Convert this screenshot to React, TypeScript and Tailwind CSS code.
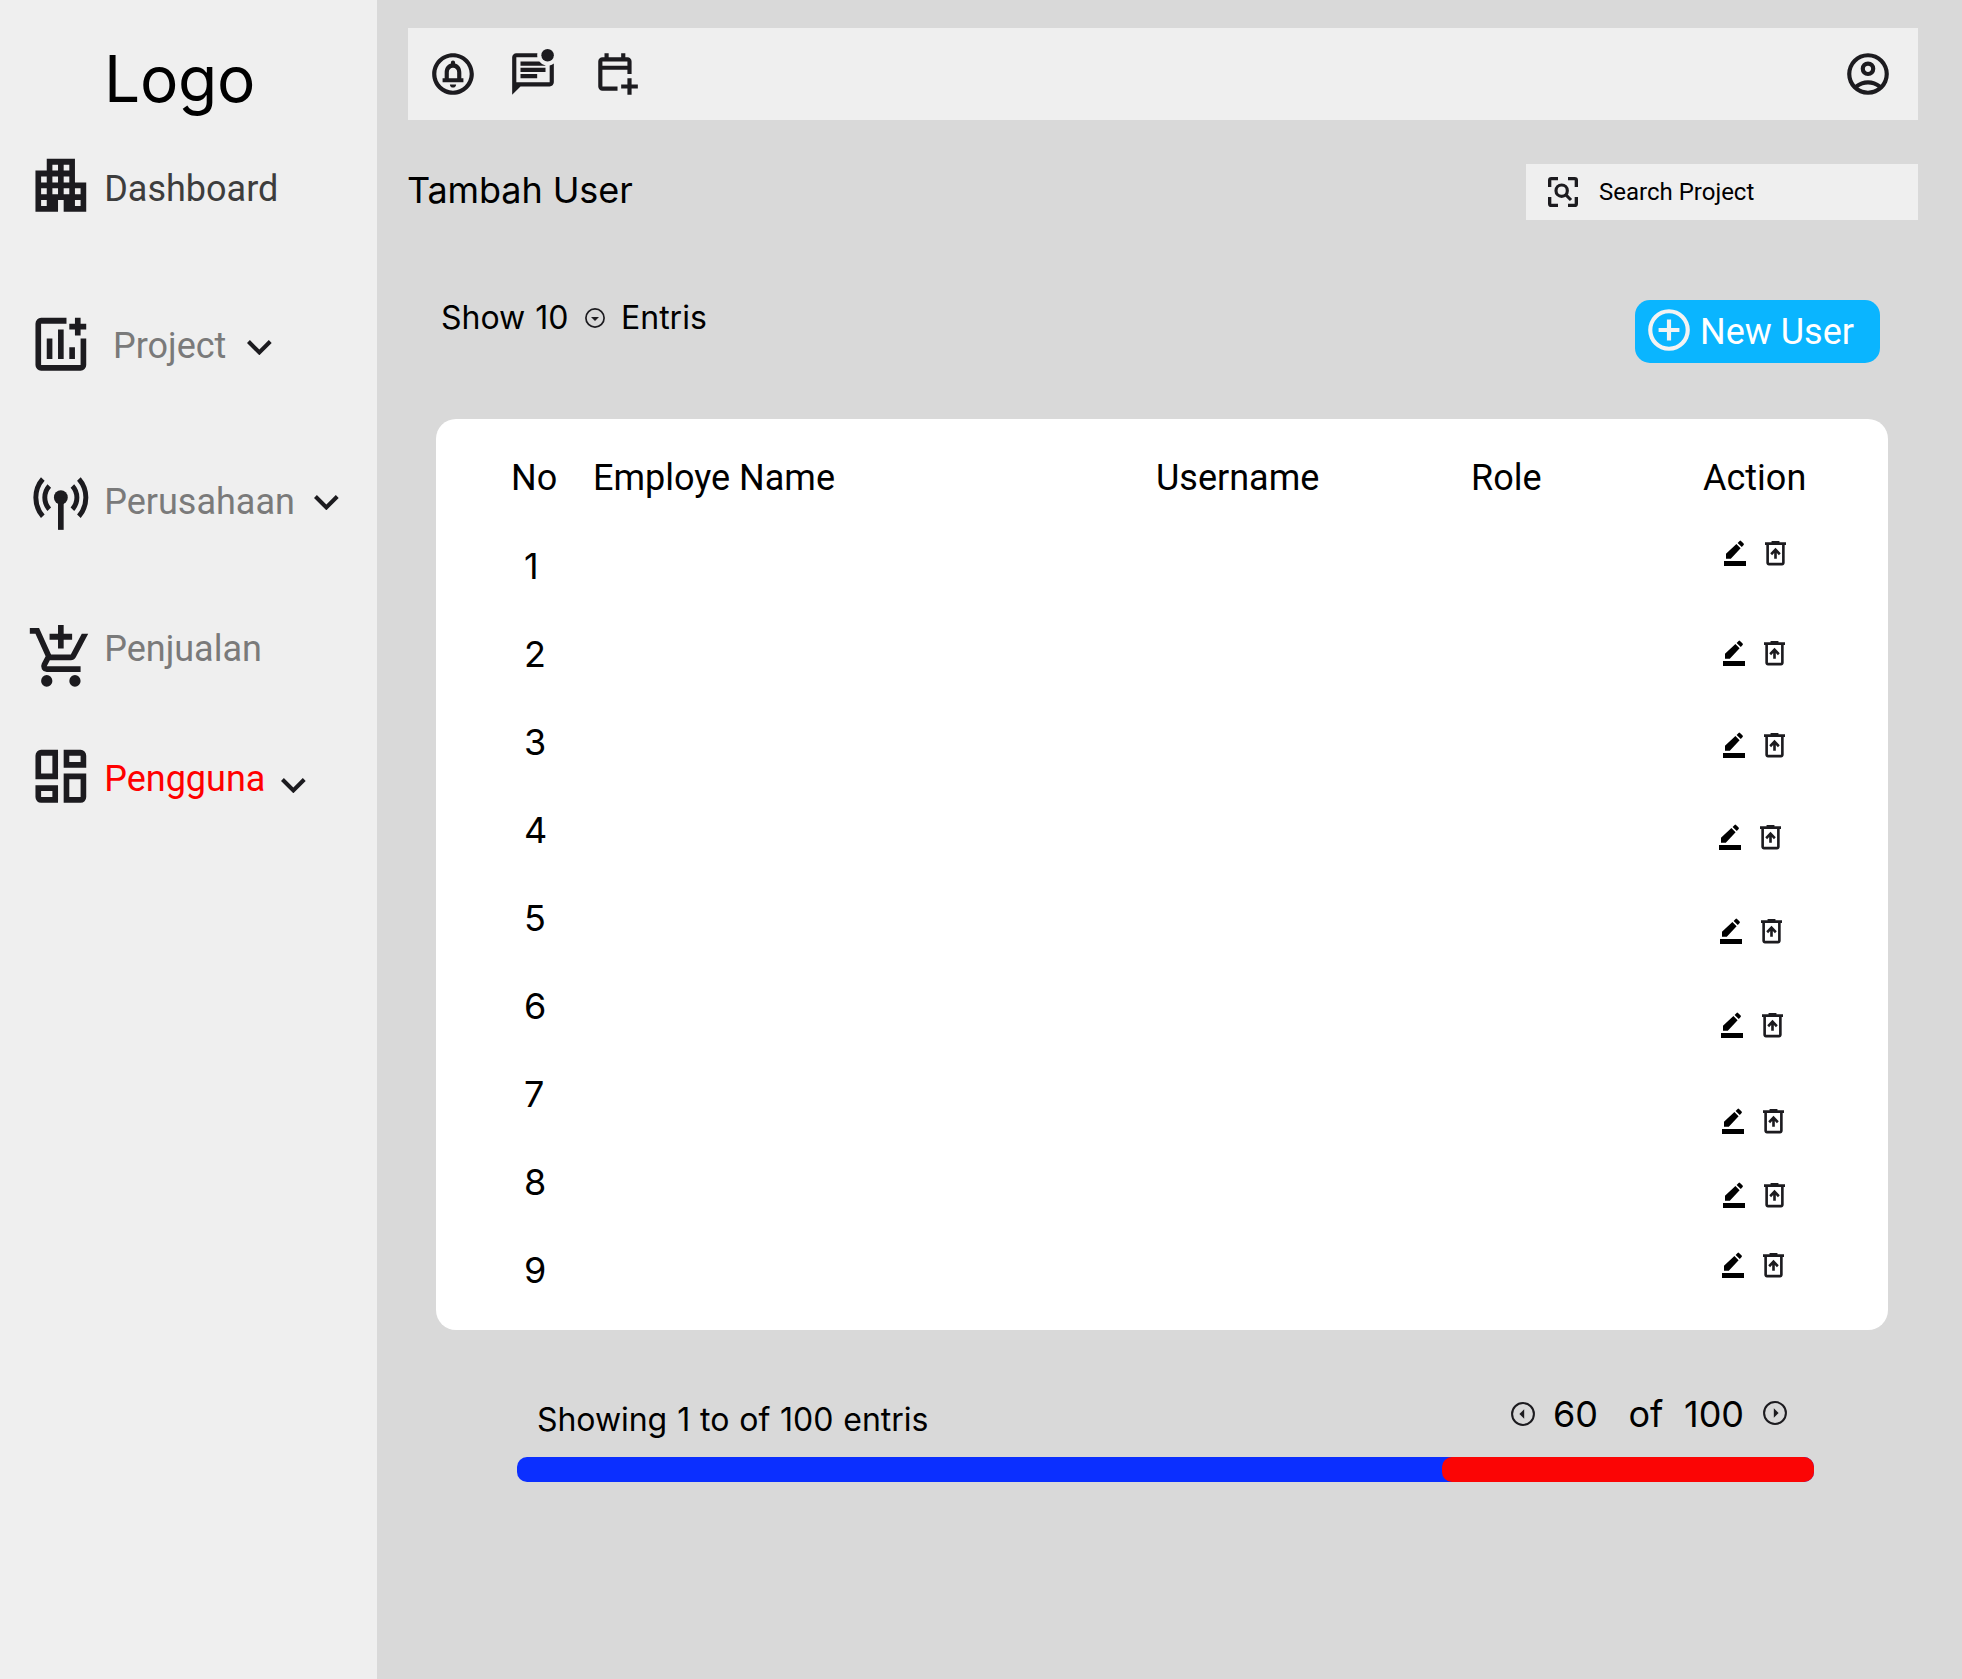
import type { ReactNode } from "react";
import { MdApartment, MdOutlineCircleNotifications, MdOutlineMarkUnreadChatAlt } from "react-icons/md";

const ROBOTO = "font-['Roboto',sans-serif]";
const INTER = "font-['Inter',sans-serif]";

function Symbol({ d, className }: { d: string; className: string }) {
  return (
    <svg viewBox="0 -960 960 960" preserveAspectRatio="none" fill="currentColor" className={className}>
      <path d={d} />
    </svg>
  );
}

const CART =
  "M440-600v-120H320v-80h120v-120h80v120h120v80H520v120h-80ZM280-80q-33 0-56.5-23.5T200-160q0-33 23.5-56.5T280-240q33 0 56.5 23.5T360-160q0 33-23.5 56.5T280-80Zm400 0q-33 0-56.5-23.5T600-160q0-33 23.5-56.5T680-240q33 0 56.5 23.5T760-160q0 33-23.5 56.5T680-80ZM40-800v-80h131l170 360h280l156-280h91L692-482q-11 20-29.5 31T622-440H324l-44 80h480v80H280q-45 0-68.5-39t-1.5-79l54-98-144-304H40Z";
const CALENDAR =
  "M680-80v-120H560v-80h120v-120h80v120h120v80H760v120h-80Zm-480-80q-33 0-56.5-23.5T120-240v-480q0-33 23.5-56.5T200-800h40v-80h80v80h240v-80h80v80h40q33 0 56.5 23.5T760-720v240h-80v-80H200v320h290v80H200Zm0-480h480v-80H200v80Z";
const ACCOUNT =
  "M234-276q51-39 114-61.5T480-360q69 0 132 22.5T726-276q35-41 54.5-93T800-480q0-133-93.5-226.5T480-800q-133 0-226.5 93.5T160-480q0 59 19.5 111t54.5 93Zm246-164q-59 0-99.5-40.5T340-580q0-59 40.5-99.5T480-720q59 0 99.5 40.5T620-580q0 59-40.5 99.5T480-440Zm0 360q-83 0-156-31.5T197-197q-54-54-85.5-127T80-480q0-83 31.5-156T197-763q54-54 127-85.5T480-880q83 0 156 31.5T763-763q54 54 85.5 127T880-480q0 83-31.5 156T763-197q-54 54-127 85.5T480-80Zm0-80q53 0 100-15.5t86-44.5q-39-29-86-44.5T480-280q-53 0-100 15.5T294-220q39 29 86 44.5T480-160Zm0-360q26 0 43-17t17-43q0-26-17-43t-43-17q-26 0-43 17t-17 43q0 26 17 43t43 17Z";
const ADD_CIRCLE =
  "M440-280h80v-160h160v-80H520v-160h-80v160H280v80h160v160Zm40 200q-83 0-156-31.5T197-197q-54-54-85.5-127T80-480q0-83 31.5-156T197-763q54-54 127-85.5T480-880q83 0 156 31.5T763-763q54 54 85.5 127T880-480q0 83-31.5 156T763-197q-54 54-127 85.5T480-80Zm0-80q134 0 227-93t93-227q0-134-93-227t-227-93q-134 0-227 93t-93 227q0 134 93 227t227 93Z";

const NAV_ICON = "block h-[70.7px] w-[67.7px] shrink-0 text-[#1c1b1f]";

function AddChartIcon() {
  return (
    <svg viewBox="0 0 24 24" preserveAspectRatio="none" fill="currentColor" className={NAV_ICON}>
      <path d="M14 3v2H5v14h14v-9h2v9q0 .83-.59 1.41T19 21H5q-.83 0-1.41-.59T3 19V5q0-.83.59-1.41T5 3zM7 10h2v7H7zM11 7h2v10h-2zM15 13h2v4h-2zM17 3h2v2h2v2h-2v2h-2V7h-2V5h2z" />
    </svg>
  );
}

function AntennaIcon() {
  return (
    <svg viewBox="0 0 24 24" preserveAspectRatio="none" fill="none" stroke="currentColor" strokeWidth={1.75} className={NAV_ICON}>
      <path d="M5.6 3.7A9.4 9.4 0 0 0 5.6 16.4M18.4 3.7A9.4 9.4 0 0 1 18.4 16.4M7.9 6.1A5.7 5.7 0 0 0 7.9 14M16.1 6.1A5.7 5.7 0 0 1 16.1 14" />
      <circle cx="12" cy="10" r="2.45" fill="currentColor" stroke="none" />
      <path d="M12 10V21" strokeWidth={2} />
    </svg>
  );
}

function DashboardIcon() {
  return (
    <svg viewBox="0 0 24 24" preserveAspectRatio="none" fill="currentColor" fillRule="evenodd" className={NAV_ICON}>
      <path d="M11 3v10H3V5a2 2 0 0 1 2-2zM9 5H5v6h4zM13 3h6a2 2 0 0 1 2 2v4.1h-8zM15 5v2.1h4V5zM13 11h8v8a2 2 0 0 1-2 2h-6zM15 13v6h4v-6zM3 15h8v6H5a2 2 0 0 1-2-2zM5 17v2h4v-2z" />
    </svg>
  );
}

function CartIcon() {
  return <Symbol d={CART} className={NAV_ICON} />;
}

function Chevron({ className }: { className: string }) {
  return (
    <svg viewBox="240 -640 480 296" preserveAspectRatio="none" fill="#1c1b1f" className={"h-[15.3px] w-[24.7px] shrink-0 " + className}>
      <path d="M480-344 240-584l56-56 184 184 184-184 56 56-240 240Z" />
    </svg>
  );
}

type NavItem = { label: string; icon: ReactNode; row: string; text: string; chevron?: string };

const NAV: NavItem[] = [
  {
    label: "Dashboard",
    icon: <MdApartment preserveAspectRatio="none" className={NAV_ICON} />,
    row: "mt-0",
    text: "ml-[10px] mt-[18.5px] text-[#3d3d3d]",
  },
  {
    label: "Project",
    icon: <AddChartIcon />,
    row: "mt-[88.6px]",
    text: "ml-[18.8px] mt-[16.2px] w-[134.5px] text-[#7a7a7a]",
    chevron: "mt-[31px]",
  },
  {
    label: "Perusahaan",
    icon: <AntennaIcon />,
    row: "mt-[89px]",
    text: "ml-[10px] mt-[12.5px] w-[210.3px] text-[#7a7a7a]",
    chevron: "mt-[26.2px]",
  },
  {
    label: "Penjualan",
    icon: <CartIcon />,
    row: "mt-[82.7px]",
    text: "ml-[10px] mt-[6.1px] text-[#7a7a7a]",
  },
  {
    label: "Pengguna",
    icon: <DashboardIcon />,
    row: "mt-[48.1px]",
    text: "ml-[10px] mt-[17.3px] w-[177.3px] text-[#ff0000]",
    chevron: "mt-[37px]",
  },
];

function Sidebar() {
  return (
    <aside className="flex w-[377px] shrink-0 flex-col bg-[#efefef] pl-[26.5px]">
      <div className={"h-[149.5px] pl-[77.5px] pt-[40px] text-[64px] leading-[78px] tracking-[-0.3px] text-black " + INTER}>
        Logo
      </div>
      <nav className="flex flex-col">
        {NAV.map((item) => (
          <a key={item.label} className={"flex h-[70.7px] items-start " + item.row}>
            {item.icon}
            <span className={"shrink-0 text-[36px] leading-[42px] " + ROBOTO + " " + item.text}>{item.label}</span>
            {item.chevron && <Chevron className={item.chevron} />}
          </a>
        ))}
      </nav>
    </aside>
  );
}

function TopBar() {
  return (
    <header className="flex h-[92px] items-center bg-[#efefef] text-[#1c1b1f]">
      <MdOutlineCircleNotifications className="ml-[20px] size-[50px]" />
      <MdOutlineMarkUnreadChatAlt className="ml-[30px] size-[50px]" />
      <Symbol d={CALENDAR} className="ml-[34px] size-[50px]" />
      <Symbol d={ACCOUNT} className="ml-auto mr-[25px] size-[50px]" />
    </header>
  );
}

function SearchIcon() {
  return (
    <svg viewBox="0 0 24 24" fill="none" stroke="#1c1b1f" strokeWidth={2} className="size-[40px] shrink-0">
      <path d="M4 9V5q0-1 1-1h4M15 4h4q1 0 1 1v4M20 15v4q0 1-1 1h-4M9 20H5q-1 0-1-1v-4" />
      <circle cx="11.2" cy="11.2" r="3.4" strokeWidth={1.9} />
      <path d="M13.4 13.4l3.4 3.4" strokeWidth={1.9} />
    </svg>
  );
}

function CircleArrow({ d, className }: { d: string; className: string }) {
  return (
    <svg viewBox="2 2 20 20" fill="#1c1b1f" className={"shrink-0 " + className}>
      <circle cx="12" cy="12" r="9.1" fill="none" stroke="#1c1b1f" strokeWidth={1.7} />
      <path d={d} />
    </svg>
  );
}

function EditIcon() {
  return (
    <svg viewBox="0 0 22 26" fill="#000" className="h-[26px] w-[22px]">
      <path d="M0 21h22v5H0zM2 18.8v-5L12.4 4.1l4.2 4.2L6.8 18.8zM13.6 3L15.6 .9q.7-.6 1.4 0l2.6 2.7q.7.7 0 1.4L17.8 7.1z" />
    </svg>
  );
}

function TrashIcon() {
  return (
    <svg viewBox="160 -840 640 720" preserveAspectRatio="none" fill="#1c1b1f" className="mt-px h-[24.5px] w-[21px]">
      <path d="M440-320h80v-166l64 62 56-56-160-160-160 160 56 56 64-62v166ZM280-120q-33 0-56.5-23.5T200-200v-520h-40v-80h200v-40h240v40h200v80h-40v520q0 33-23.5 56.5T680-120H280Zm400-600H280v520h400v-520Z" />
    </svg>
  );
}

const ROWS = [
  { no: 1, actions: "mt-0 ml-[5px]" },
  { no: 2, actions: "mt-[12px] ml-[4px]" },
  { no: 3, actions: "mt-[16px] ml-[4px]" },
  { no: 4, actions: "mt-[20px] ml-0" },
  { no: 5, actions: "mt-[26px] ml-px" },
  { no: 6, actions: "mt-[32px] ml-[2px]" },
  { no: 7, actions: "mt-[40px] ml-[3px]" },
  { no: 8, actions: "mt-[26px] ml-[4px]" },
  { no: 9, actions: "mt-[8px] ml-[3px]" },
];

function UserTable() {
  return (
    <section className="ml-[28px] mt-[56px] h-[911px] w-[1452px] overflow-hidden rounded-[20px] bg-white pt-[38px] text-[36px] text-black">
      <div className={"flex h-[83px] pl-[75px] leading-[42px] " + ROBOTO}>
        <span className="w-[82px]">No</span>
        <span className="w-[563px]">Employe Name</span>
        <span className="w-[315px]">Username</span>
        <span className="w-[232px]">Role</span>
        <span>Action</span>
      </div>
      {ROWS.map((row) => (
        <div key={row.no} className="flex h-[88px] items-start pl-[88px]">
          <span className={"mt-[4px] w-[1195px] leading-[44px] " + INTER}>{row.no}</span>
          <div className={"flex gap-[19px] " + row.actions}>
            <EditIcon />
            <TrashIcon />
          </div>
        </div>
      ))}
    </section>
  );
}

function Footer() {
  return (
    <footer className={"ml-[109px] mt-[62px] w-[1297px] text-black " + INTER}>
      <div className="flex h-[65px] items-start">
        <span className="ml-[20px] mt-[8px] w-[974px] text-[32px] leading-[39px] tracking-[-0.05px] [word-spacing:1px]">
          Showing 1 to of 100 entris
        </span>
        <CircleArrow d="M13 8v8l-4-4z" className="mt-[10.3px] size-[24px]" />
        <span className="ml-[18px] w-[75.5px] text-[36px] leading-[44px]">60</span>
        <span className="w-[55.5px] text-[36px] leading-[44px]">of</span>
        <span className="w-[79px] text-[36px] leading-[44px]">100</span>
        <CircleArrow d="M11 8v8l4-4z" className="mt-[9.3px] size-[24px]" />
      </div>
      <div className="flex h-[25px] justify-end rounded-[10px] bg-[#0b2fff]">
        <div className="w-[372px] rounded-[10px] bg-[#fb0505]" />
      </div>
    </footer>
  );
}

export default function App() {
  return (
    <div className="flex h-[1679px] w-[1962px] overflow-hidden bg-[#d9d9d9]">
      <Sidebar />
      <main className="flex-1 pl-[31px] pr-[44px] pt-[28px]">
        <TopBar />
        <div className="mt-[44px] flex h-[56px] items-start justify-between">
          <h1 className={"-ml-px mt-[4px] text-[36px] leading-[44px] tracking-[-0.1px] text-black " + INTER}>Tambah User</h1>
          <div className="flex h-[56px] w-[392px] items-center bg-[#efefef] pl-[17px]">
            <SearchIcon />
            <span className={"ml-[16px] text-[24px] leading-[28px] text-black " + ROBOTO}>Search Project</span>
          </div>
        </div>
        <div className="mt-[78px] flex h-[65px] items-start pl-[33px]">
          <span className={"w-[144px] text-[32px] leading-[39px] text-black [word-spacing:1px] " + INTER}>Show 10</span>
          <CircleArrow d="M8 11h8l-4 4z" className="mt-[10px] size-[20px]" />
          <span className={"ml-[16px] text-[32px] leading-[39px] text-black " + INTER}>Entris</span>
          <button className="ml-auto mr-[38px] mt-[2px] flex h-[63px] w-[245px] items-start rounded-[15px] bg-[#0ab5ff] pl-[9px] pt-[5px] text-white">
            <Symbol d={ADD_CIRCLE} className="size-[50px] shrink-0 text-[#f3f3f3]" />
            <span className={"ml-[6px] mt-[6px] whitespace-nowrap text-[36px] leading-[42px] " + ROBOTO}>New User</span>
          </button>
        </div>
        <UserTable />
        <Footer />
      </main>
    </div>
  );
}
